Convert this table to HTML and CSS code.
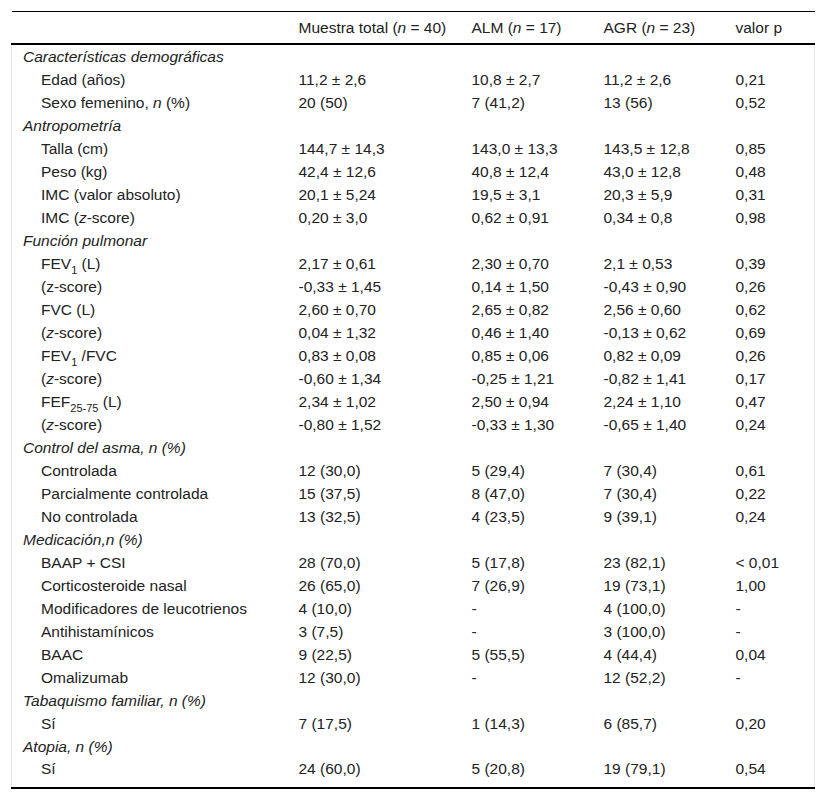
FILE: index.html
```html
<!DOCTYPE html>
<html lang="es">
<head>
<meta charset="utf-8">
<title>Tabla</title>
<link rel="stylesheet" href="styles.css">
</head>
<body>
<div class="wrap">
<table class="data">
<colgroup>
<col class="c1"><col class="c2"><col class="c3"><col class="c4"><col class="c5">
</colgroup>
<thead>
<tr><th></th><th>Muestra total (<i>n</i> = 40)</th><th>ALM (<i>n</i> = 17)</th><th>AGR (<i>n</i> = 23)</th><th>valor p</th></tr>
</thead>
<tbody>
<tr class="cat"><td colspan="5">Características demográficas</td></tr>
<tr><td class="sub">Edad (años)</td><td>11,2 ± 2,6</td><td>10,8 ± 2,7</td><td>11,2 ± 2,6</td><td>0,21</td></tr>
<tr><td class="sub">Sexo femenino, <i>n</i> (%)</td><td>20 (50)</td><td>7 (41,2)</td><td>13 (56)</td><td>0,52</td></tr>
<tr class="cat"><td colspan="5">Antropometría</td></tr>
<tr><td class="sub">Talla (cm)</td><td>144,7 ± 14,3</td><td>143,0 ± 13,3</td><td>143,5 ± 12,8</td><td>0,85</td></tr>
<tr><td class="sub">Peso (kg)</td><td>42,4 ± 12,6</td><td>40,8 ± 12,4</td><td>43,0 ± 12,8</td><td>0,48</td></tr>
<tr><td class="sub">IMC (valor absoluto)</td><td>20,1 ± 5,24</td><td>19,5 ± 3,1</td><td>20,3 ± 5,9</td><td>0,31</td></tr>
<tr><td class="sub">IMC (<i>z</i>-score)</td><td>0,20 ± 3,0</td><td>0,62 ± 0,91</td><td>0,34 ± 0,8</td><td>0,98</td></tr>
<tr class="cat"><td colspan="5">Función pulmonar</td></tr>
<tr><td class="sub">FEV<sub>1</sub> (L)</td><td>2,17 ± 0,61</td><td>2,30 ± 0,70</td><td>2,1 ± 0,53</td><td>0,39</td></tr>
<tr><td class="sub">(z-score)</td><td>-0,33 ± 1,45</td><td>0,14 ± 1,50</td><td>-0,43 ± 0,90</td><td>0,26</td></tr>
<tr><td class="sub">FVC (L)</td><td>2,60 ± 0,70</td><td>2,65 ± 0,82</td><td>2,56 ± 0,60</td><td>0,62</td></tr>
<tr><td class="sub">(<i>z</i>-score)</td><td>0,04 ± 1,32</td><td>0,46 ± 1,40</td><td>-0,13 ± 0,62</td><td>0,69</td></tr>
<tr><td class="sub">FEV<sub>1</sub> /FVC</td><td>0,83 ± 0,08</td><td>0,85 ± 0,06</td><td>0,82 ± 0,09</td><td>0,26</td></tr>
<tr><td class="sub">(<i>z</i>-score)</td><td>-0,60 ± 1,34</td><td>-0,25 ± 1,21</td><td>-0,82 ± 1,41</td><td>0,17</td></tr>
<tr><td class="sub">FEF<sub>25-75</sub> (L)</td><td>2,34 ± 1,02</td><td>2,50 ± 0,94</td><td>2,24 ± 1,10</td><td>0,47</td></tr>
<tr><td class="sub">(<i>z</i>-score)</td><td>-0,80 ± 1,52</td><td>-0,33 ± 1,30</td><td>-0,65 ± 1,40</td><td>0,24</td></tr>
<tr class="cat"><td colspan="5">Control del asma, n (%)</td></tr>
<tr><td class="sub">Controlada</td><td>12 (30,0)</td><td>5 (29,4)</td><td>7 (30,4)</td><td>0,61</td></tr>
<tr><td class="sub">Parcialmente controlada</td><td>15 (37,5)</td><td>8 (47,0)</td><td>7 (30,4)</td><td>0,22</td></tr>
<tr><td class="sub">No controlada</td><td>13 (32,5)</td><td>4 (23,5)</td><td>9 (39,1)</td><td>0,24</td></tr>
<tr class="cat"><td colspan="5">Medicación,n (%)</td></tr>
<tr><td class="sub">BAAP + CSI</td><td>28 (70,0)</td><td>5 (17,8)</td><td>23 (82,1)</td><td>&lt; 0,01</td></tr>
<tr><td class="sub">Corticosteroide nasal</td><td>26 (65,0)</td><td>7 (26,9)</td><td>19 (73,1)</td><td>1,00</td></tr>
<tr><td class="sub">Modificadores de leucotrienos</td><td>4 (10,0)</td><td>-</td><td>4 (100,0)</td><td>-</td></tr>
<tr><td class="sub">Antihistamínicos</td><td>3 (7,5)</td><td>-</td><td>3 (100,0)</td><td>-</td></tr>
<tr><td class="sub">BAAC</td><td>9 (22,5)</td><td>5 (55,5)</td><td>4 (44,4)</td><td>0,04</td></tr>
<tr><td class="sub">Omalizumab</td><td>12 (30,0)</td><td>-</td><td>12 (52,2)</td><td>-</td></tr>
<tr class="cat"><td colspan="5">Tabaquismo familiar, n (%)</td></tr>
<tr><td class="sub">Sí</td><td>7 (17,5)</td><td>1 (14,3)</td><td>6 (85,7)</td><td>0,20</td></tr>
<tr class="cat"><td colspan="5">Atopia, n (%)</td></tr>
<tr class="last"><td class="sub">Sí</td><td>24 (60,0)</td><td>5 (20,8)</td><td>19 (79,1)</td><td>0,54</td></tr>
</tbody>
</table>
</div>
</body>
</html>
```
FILE: styles.css
```css
html, body {
  margin: 0;
  padding: 0;
  background: #ffffff;
}
.wrap {
  padding: 11px 0 0 11px;
}
.data {
  width: 803px;
  table-layout: fixed;
  border-collapse: collapse;
  font-family: "Liberation Sans", Arial, sans-serif;
  font-size: 15.5px;
  color: #222222;
}
.c1 { width: 276px; }
.c2 { width: 173px; }
.c3 { width: 132px; }
.c4 { width: 132px; }
.c5 { width: 90px; }
.data th {
  font-weight: normal;
  text-align: left;
  height: 31px;
  padding: 0 11px;
  line-height: 17px;
  vertical-align: middle;
  border-top: 1px solid #000;
  border-bottom: 2px solid #000;
  white-space: nowrap;
}
.data td {
  height: 23px;
  padding: 0 11px;
  line-height: 17px;
  vertical-align: middle;
  white-space: nowrap;
}
.data tbody tr td:first-child {
  border-left: 1px solid #e6e6e6;
}
.data tbody tr td:last-child {
  border-right: 1px solid #e6e6e6;
}
.data tr.cat td {
  font-style: italic;
}
.data td.sub {
  padding-left: 29px;
}
.data tr.last td {
  border-bottom: 2px solid #000;
  height: 27px;
  vertical-align: top;
  padding-top: 2px;
}
.data sub {
  font-size: 11px;
  line-height: 0;
  vertical-align: -5px;
}
```
